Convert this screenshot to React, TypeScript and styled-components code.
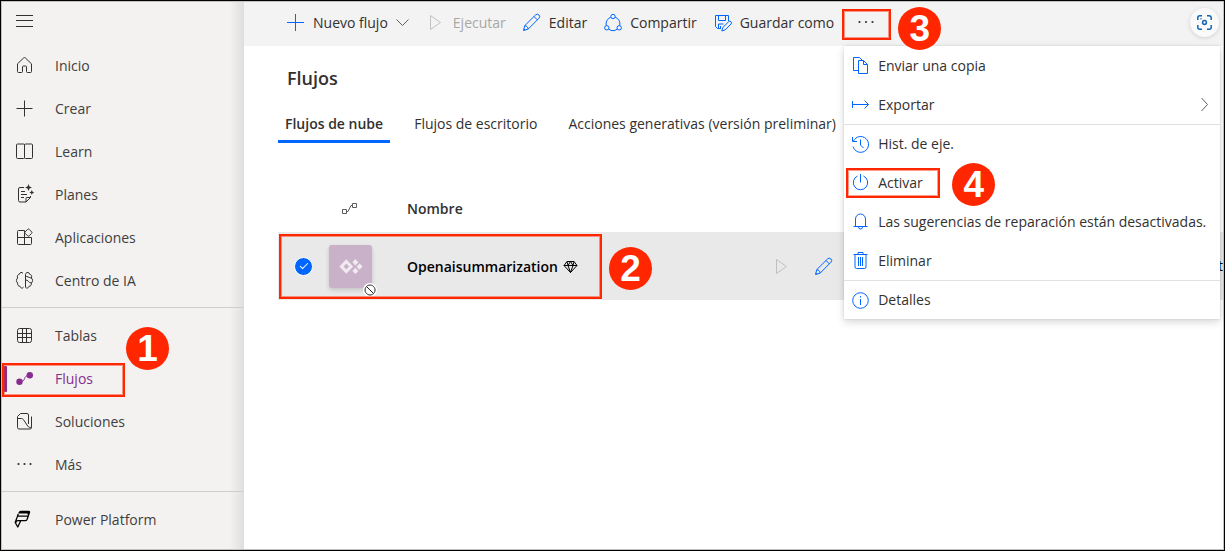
import React from 'react';
import styled, { createGlobalStyle, css } from 'styled-components';

const blue = '#0066ff';
const red = '#ff2600';
const purple = '#862d8f';
const ink = '#323130';

const GlobalStyle = createGlobalStyle`
  *, *::before, *::after { box-sizing: border-box; }
  body {
    margin: 0;
    background: #fff;
    color: ${ink};
    font: 14px/20px "Open Sans", "Noto Sans", sans-serif;
  }
  button { font: inherit; color: inherit; background: none; border: 0; padding: 0; cursor: pointer; }
  a { color: inherit; text-decoration: none; }
  ul { list-style: none; margin: 0; padding: 0; }
`;

const Frame = styled.div`
  min-height: 100vh;
  display: flex;
  border: 1px solid #000;
  overflow: hidden;
`;

const Window = styled.div`
  flex: 1;
  min-width: 0;
  display: flex;
  border: 1px solid #c2c2c2;
`;

const Icon = styled.svg.attrs({ viewBox: '0 0 21 21', 'aria-hidden': true })<{ $tone?: string }>`
  flex: none;
  width: 21px;
  height: 21px;
  fill: none;
  stroke: ${(p) => p.$tone ?? 'currentColor'};
  stroke-width: 1;
  stroke-linejoin: round;
  .solid { fill: ${(p) => p.$tone ?? 'currentColor'}; stroke: none; }
`;

const SmallIcon = styled.svg.attrs({ viewBox: '0 0 15 15', 'aria-hidden': true })`
  flex: none;
  width: 15px;
  height: 15px;
  fill: none;
  stroke: currentColor;
`;

const Sidebar = styled.nav`
  flex: none;
  width: 242px;
  background: linear-gradient(to left, #dfdedd, rgba(243, 242, 241, 0) 14px) #f3f2f1;
`;

const SidebarHeader = styled.div`
  height: 42px;
  padding: 8px 12px;
`;

const IconButton = styled.button`
  display: flex;
`;

const NavGroup = styled.ul`
  & + & {
    margin-top: 5px;
    border-top: 1px solid #cfcecd;
    padding-top: 6px;
  }
`;

const NavItem = styled.li`
  position: relative;
`;

const NavLink = styled.a<{ $active?: boolean }>`
  height: 43px;
  display: flex;
  align-items: center;
  gap: 20px;
  padding-left: 12px;
  color: ${(p) => (p.$active ? purple : '#3f3e3d')};
  ${(p) =>
    p.$active &&
    css`
      &::before {
        content: '';
        position: absolute;
        left: 2px;
        top: 9px;
        width: 3px;
        height: 26px;
        border-radius: 1px;
        background: ${purple};
      }
    `}
`;

const calloutPlaces = {
  nav: css`left: 0; top: 6px; width: 123px; height: 34px;`,
  row: css`left: 1px; top: 2px; width: 323px; height: 65px;`,
  more: css`left: -7px; top: 7px; width: 49px; height: 31px;`,
  menu: css`left: 2px; top: 5px; width: 94px; height: 30px;`,
};

const badgePlaces = {
  nav: css`left: 124px; top: -30px;`,
  row: css`left: 331px; top: 15px;`,
  more: css`left: 49px; top: 5px;`,
  menu: css`left: 108px; top: 0;`,
};

type Place = keyof typeof calloutPlaces;

const Outline = styled.span<{ $place: Place }>`
  position: absolute;
  z-index: 3;
  pointer-events: none;
  border: 2px solid ${red};
  box-shadow: inset 0 0 0 1px rgba(255, 38, 0, 0.45);
  ${(p) => calloutPlaces[p.$place]}
`;

const Badge = styled.span<{ $place: Place }>`
  position: absolute;
  z-index: 4;
  pointer-events: none;
  width: 43px;
  height: 43px;
  border-radius: 50%;
  background: ${red};
  color: #fff;
  font: bold 37px/43px "Liberation Sans", Arial, sans-serif;
  text-align: center;
  ${(p) => badgePlaces[p.$place]}
`;

function Callout({ place, step }: { place: Place; step: number }) {
  return (
    <>
      <Outline $place={place} />
      <Badge $place={place}>{step}</Badge>
    </>
  );
}

const Main = styled.main`
  flex: 1;
  min-width: 0;
  background: #fff;
`;

const Toolbar = styled.div`
  height: 44px;
  display: flex;
  align-items: stretch;
  gap: 15px;
  padding: 0 4px 3px 41px;
  background: #f3f3f3;
`;

const Command = styled.button`
  display: flex;
  align-items: center;
  gap: 7px;
  white-space: nowrap;
  &:disabled { color: #a9a7a5; cursor: default; }
`;

const Chevron = styled(SmallIcon)`
  color: #605e5c;
`;

const MoreHost = styled.div`
  position: relative;
  display: flex;
`;

const MoreButton = styled.button`
  width: 35px;
  display: flex;
  align-items: center;
  justify-content: center;
`;

const CaptureButton = styled.button`
  align-self: center;
  margin-left: auto;
  width: 29px;
  height: 29px;
  border-radius: 50%;
  display: flex;
  align-items: center;
  justify-content: center;
  background: #fafafa;
  box-shadow: 0 1px 4px rgba(0, 0, 0, 0.15);
`;

const Menu = styled.ul`
  position: absolute;
  z-index: 2;
  left: -5px;
  top: 44px;
  width: 376px;
  background: #fff;
  box-shadow: 0 3px 8px rgba(0, 0, 0, 0.16), 0 0 2px rgba(0, 0, 0, 0.12);
`;

const MenuItem = styled.li<{ $divided?: boolean }>`
  position: relative;
  height: 39px;
  display: flex;
  border-top: ${(p) => (p.$divided ? '1px solid #e1e1e1' : '0')};
`;

const MenuButton = styled.button`
  flex: 1;
  display: flex;
  align-items: center;
  gap: 7px;
  padding: 0 8px 0 6px;
  white-space: nowrap;
`;

const SubmenuArrow = styled(Chevron)`
  margin-left: auto;
`;

const Content = styled.section`
  padding: 20px 0 0 34px;
`;

const Title = styled.h1`
  margin: 0 0 18px 9px;
  font-size: 18px;
  line-height: 24px;
  font-weight: 600;
`;

const Tabs = styled.div`
  display: flex;
  gap: 17px;
  margin-bottom: 43px;
`;

const Tab = styled.button<{ $active?: boolean }>`
  height: 35px;
  padding: 6px 7px;
  border-bottom: 3px solid ${(p) => (p.$active ? blue : 'transparent')};
  font-weight: ${(p) => (p.$active ? 600 : 400)};
  white-space: nowrap;
`;

const FlowTable = styled.table`
  width: 100%;
  table-layout: fixed;
  border-collapse: collapse;
  th, td { padding: 0; text-align: left; }
  th { height: 46px; font-weight: 600; }
`;

const SelectCol = styled.col` width: 51px; `;
const KindCol = styled.col` width: 78px; `;
const NameCol = styled.col` width: 364px; `;

const FlowRow = styled.tr`
  height: 68px;
  background: #e9e9e9;
  color: #000;
`;

const SelectCell = styled.td`
  position: relative;
`;

const RowCheck = styled.input.attrs({ type: 'checkbox' })`
  appearance: none;
  display: grid;
  place-items: center;
  width: 19px;
  height: 19px;
  margin: 0 0 0 16px;
  border: 1px solid #fff;
  border-radius: 50%;
  background: #fff;
  &:checked { background: ${blue}; }
  &:checked::after {
    content: '';
    width: 8px;
    height: 4px;
    margin-bottom: 2px;
    border: solid #fff;
    border-width: 0 0 1px 1px;
    transform: rotate(-45deg);
  }
`;

const KindHead = styled.div`
  display: flex;
  padding-left: 10px;
`;

const Tile = styled.div`
  position: relative;
  width: 43px;
  height: 43px;
  border-radius: 3px;
  background: #c8b1c9;
  box-shadow: 0 2px 4px rgba(0, 0, 0, 0.16);
`;

const TileArt = styled.svg`
  display: block;
  width: 43px;
  height: 43px;
`;

const OffMark = styled.svg`
  position: absolute;
  right: -5px;
  bottom: -9px;
  width: 14px;
  height: 14px;
`;

const FlowName = styled.a`
  display: flex;
  align-items: center;
  gap: 5px;
  padding-top: 2px;
  font-weight: 600;
`;

const RowActions = styled.div`
  display: flex;
  gap: 21px;
`;

const TypeText = styled.div`
  text-align: right;
`;

const Dots = () => (
  <>
    <circle className="solid" cx="4.5" cy="10" r="1.1" />
    <circle className="solid" cx="10.5" cy="10" r="1.1" />
    <circle className="solid" cx="16.5" cy="10" r="1.1" />
  </>
);

const PlayShape = () => <path d="M5.5 3.5V17.5L15.5 10.5Z" />;

const PencilShape = () => (
  <>
    <path d="M2.500 18.500L3.800 13.600L14.600 2.900a2.300 2.300 0 0 1 3.300 3.400L7.200 17.100Z" />
    <path d="M13 4.500l3.400 3.400M3.800 13.600c1.800.2 3.200 1.600 3.400 3.500M2.800 17l1.400 1.200" />
  </>
);

const shapes: Record<string, React.ReactNode> = {
  inicio: <path d="M3.500 8.800L9.700 2.900a1.200 1.200 0 0 1 1.600 0L17.500 8.800V16.500a1 1 0 0 1-1 1h-3a1 1 0 0 1-1-1V12a1 1 0 0 0-1-1h-2a1 1 0 0 0-1 1v4.500a1 1 0 0 1-1 1h-3a1 1 0 0 1-1-1Z" />,
  crear: <path d="M10.500 2.500V18.500M2.500 10.500H18.500" />,
  learn: <path d="M10.500 4a1 1 0 0 0-1-1H3.500a1 1 0 0 0-1 1V16.500a1 1 0 0 0 1 1H9.500a1 1 0 0 0 1-1V4a1 1 0 0 1 1-1h6a1 1 0 0 1 1 1V16.500a1 1 0 0 1-1 1h-6a1 1 0 0 1-1-1" />,
  planes: (
    <>
      <path d="M10 3.500H6a1.500 1.500 0 0 0-1.500 1.500V16.500a1.500 1.500 0 0 0 1.500 1.500H12L16.500 13.500V12M12 18V14.500a1 1 0 0 1 1-1H16.500M7 7.500h4M7 10.500h6M7 13.500h3" />
      <path className="solid" d="M14.500 0l1 2.500 2.500 1-2.500 1-1 2.500-1-2.500-2.500-1 2.500-1zM17.800 6l.8 1.700 1.700.8-1.700.8-.8 1.700-.8-1.700-1.700-.8 1.700-.8z" />
    </>
  ),
  aplicaciones: (
    <>
      <path d="M10.500 17.500V3.500H4.500a1 1 0 0 0-1 1V16.500a1 1 0 0 0 1 1H16.500a1 1 0 0 0 1-1V10.500H3.500" />
      <path fill="#f3f2f1" d="M13.700 2.300a1 1 0 0 1 1.400 0L17.700 4.900a1 1 0 0 1 0 1.400L15.100 8.900a1 1 0 0 1-1.400 0L11.100 6.300a1 1 0 0 1 0-1.400Z" />
    </>
  ),
  ia: (
    <>
      <path d="M9 3.300C8 1.900 5.700 2.200 5.400 4.200C3.500 4.500 2.800 6.500 3.700 8C2 9 2 12 3.700 13C3.200 15 4.500 16.300 6 16.300C6.600 18.300 8.500 18.600 9.500 17.300" />
      <path d="M12 3.300C13 1.900 15.300 2.200 15.600 4.200C17.500 4.500 18.200 6.500 17.300 8C19 9 19 12 17.300 13C17.800 15 16.500 16.300 15 16.300C14.400 18.300 12.500 18.600 11.500 17.300V4.200Q11.500 3.700 12 3.300ZM11.500 6.500C13.500 6 14 7.500 17.300 8M11.500 10C14 9.500 14.500 13 17.300 13" />
    </>
  ),
  tablas: (
    <>
      <rect x="3.500" y="3.500" width="14" height="14" rx="2" />
      <path d="M8.500 3.500v14M12.500 3.500v14M3.500 8.500h14M3.500 12.500h14" />
    </>
  ),
  flujos: (
    <>
      <circle className="solid" cx="5.500" cy="13.700" r="3.200" />
      <circle className="solid" cx="15.800" cy="7.300" r="3.200" />
      <path d="M5.500 13.700C13 14 8 7.300 15.800 7.300" />
    </>
  ),
  soluciones: (
    <>
      <path d="M14.500 13V4a1.500 1.500 0 0 0-1.500-1.500H6.500L3.500 5.500V16.500a1.500 1.500 0 0 0 1.500 1.500H16a1.500 1.500 0 0 0 1.500-1.500V5.500" />
      <path d="M3.500 7.500H7.500c1 0 1.500.5 2.200 1.500l4 6c.8 1.200 1.800 1.500 3.800 1.500" />
    </>
  ),
  mas: <Dots />,
  power: (
    <>
      <path className="solid" d="M4 4.500L5.200 2.600Q5.700 1.700 6.700 1.700H14.500Q16.800 1.700 16 4L15.200 6.300Q14.700 7.500 13.500 7.500L13.800 5.500Q13.900 4.500 12.900 4.500Z" />
      <path strokeWidth="1.300" d="M4.200 7.200H14.200L13 10.500Q12.500 11.700 11.300 11.700H6.700L3.800 18L1.200 13.500L3 8.500Q3.400 7.200 4.500 7.200M3.200 8L4.200 5M6.700 11.700H4Q2.500 11.700 1.800 13.500" />
    </>
  ),
  copia: <path d="M8 15.500H3.500V2.500H9.500L12.500 5.500M8.500 5.500H13.500L17.500 9.500V18.500H8.500ZM13.500 5.500V9.500H17.500" />,
  exportar: <path d="M2.500 7v7M3 10.500H18.500M14.500 6.500l4 4-4 4" />,
  historial: <path d="M3.500 7A7.900 7.900 0 1 1 3 12.500M2.500 3V7.500H7M10.500 5.500v5.500l3 3" />,
  activar: <path d="M10.500 2v8.500M7.500 4A7.200 7.200 0 1 0 13.500 4" />,
  campana: <path d="M5.500 15.500V8a5 5 0 0 1 10 0V15.500M3.500 15.500H17.500M8.500 16a2 2 0 0 0 4 0" />,
  eliminar: <path d="M3.500 4.500H17.500M8 4.500V2.500H13V4.500M5 4.500V17a1.500 1.500 0 0 0 1.500 1.500H14.500A1.500 1.500 0 0 0 16 17V4.500M8.500 7v9M10.500 7v9M12.500 7v9" />,
  detalles: (
    <>
      <circle cx="10.500" cy="10.500" r="7.800" />
      <path d="M10.500 9v6M10.500 6v1.500" />
    </>
  ),
};

const navGroups = [
  [
    ['inicio', 'Inicio'],
    ['crear', 'Crear'],
    ['learn', 'Learn'],
    ['planes', 'Planes'],
    ['aplicaciones', 'Aplicaciones'],
    ['ia', 'Centro de IA'],
  ],
  [
    ['tablas', 'Tablas'],
    ['flujos', 'Flujos'],
    ['soluciones', 'Soluciones'],
    ['mas', 'Más'],
  ],
  [['power', 'Power Platform']],
];

const menuItems = [
  { icon: 'copia', label: 'Enviar una copia' },
  { icon: 'exportar', label: 'Exportar', submenu: true },
  { icon: 'historial', label: 'Hist. de eje.', divided: true },
  { icon: 'activar', label: 'Activar', step: 4 },
  { icon: 'campana', label: 'Las sugerencias de reparación están desactivadas.' },
  { icon: 'eliminar', label: 'Eliminar' },
  { icon: 'detalles', label: 'Detalles', divided: true },
];

export default function App() {
  return (
    <Frame>
      <GlobalStyle />
      <Window>
        <Sidebar aria-label="Principal">
          <SidebarHeader>
            <IconButton aria-label="Menú">
              <Icon $tone={ink}>
                <path d="M2 5.500H19M2 10.500H19M2 16.500H19" />
              </Icon>
            </IconButton>
          </SidebarHeader>
          {navGroups.map((group) => (
            <NavGroup key={group[0][0]}>
              {group.map(([id, label]) => (
                <NavItem key={id}>
                  <NavLink href={`#${id}`} $active={id === 'flujos'}>
                    <Icon $tone={id === 'flujos' ? purple : id === 'power' ? '#000' : ink}>{shapes[id]}</Icon>
                    {label}
                  </NavLink>
                  {id === 'flujos' && <Callout place="nav" step={1} />}
                </NavItem>
              ))}
            </NavGroup>
          ))}
        </Sidebar>

        <Main>
          <Toolbar>
            <Command>
              <Icon $tone={blue}>
                <path d="M10.500 2V19M2 10.500H19" />
              </Icon>
              Nuevo flujo
              <Chevron>
                <path d="M1.500 4.500l6 6 6-6" />
              </Chevron>
            </Command>
            <Command disabled>
              <Icon $tone="#c4c2c0">
                <PlayShape />
              </Icon>
              Ejecutar
            </Command>
            <Command>
              <Icon $tone={blue}>
                <PencilShape />
              </Icon>
              Editar
            </Command>
            <Command>
              <Icon $tone={blue}>
                <circle cx="11" cy="4.500" r="2.200" />
                <circle cx="4.800" cy="15.800" r="2.200" />
                <circle cx="17.200" cy="15.800" r="2.200" />
                <path d="M8.800 5.200A7.200 7.200 0 0 0 4.200 13.500M13.200 5.200A7.200 7.200 0 0 1 17.800 13.500M6.800 17.200A7.200 7.200 0 0 0 15.200 17.200" />
              </Icon>
              Compartir
            </Command>
            <Command>
              <Icon $tone={blue}>
                <path d="M9 16.500H5.500L3.500 14.500V3.500H16.500V9M6.500 3.500V8.500H13.500V3.500M6.500 16.500V12H11.500M8.500 14v2.500" />
                <path d="M9.800 19L10.800 15.500L16.700 9.700a1.600 1.600 0 0 1 2.300 2.300L13.200 17.900Z" />
              </Icon>
              Guardar como
            </Command>
            <MoreHost>
              <MoreButton aria-label="Más comandos" aria-haspopup="menu" aria-expanded="true">
                <Icon $tone={ink}>
                  <circle className="solid" cx="3.500" cy="10" r="1.100" />
                  <circle className="solid" cx="10" cy="10" r="1.100" />
                  <circle className="solid" cx="16.500" cy="10" r="1.100" />
                </Icon>
              </MoreButton>
              <Callout place="more" step={3} />
              <Menu>
                {menuItems.map((item) => (
                  <MenuItem key={item.icon} $divided={item.divided}>
                    <MenuButton>
                      <Icon $tone={blue}>{shapes[item.icon]}</Icon>
                      {item.label}
                      {item.submenu && (
                        <SubmenuArrow>
                          <path d="M4.500 1l6 6.500-6 6.500" />
                        </SubmenuArrow>
                      )}
                    </MenuButton>
                    {item.step && <Callout place="menu" step={item.step} />}
                  </MenuItem>
                ))}
              </Menu>
            </MoreHost>
            <CaptureButton aria-label="Captura visual">
              <Icon $tone="#1267b4">
                <path strokeWidth="1.500" d="M3.800 8V5.800a2 2 0 0 1 2-2H8M13 3.800h2.200a2 2 0 0 1 2 2V8M17.200 13v2.200a2 2 0 0 1-2 2H13M8 17.200H5.800a2 2 0 0 1-2-2V13M6.500 6.800h1" />
                <circle strokeWidth="1.500" cx="10.500" cy="10.500" r="1.900" />
              </Icon>
            </CaptureButton>
          </Toolbar>

          <Content>
            <Title>Flujos</Title>
            <Tabs role="tablist">
              <Tab role="tab" aria-selected="true" $active>Flujos de nube</Tab>
              <Tab role="tab" aria-selected="false">Flujos de escritorio</Tab>
              <Tab role="tab" aria-selected="false">Acciones generativas (versión preliminar)</Tab>
            </Tabs>
            <FlowTable>
              <colgroup>
                <SelectCol />
                <KindCol />
                <NameCol />
                <col />
                <col />
              </colgroup>
              <thead>
                <tr>
                  <th />
                  <th>
                    <KindHead>
                      <Icon $tone="#605e5c">
                        <path d="M3.500 10.500h4v4h-4zM13.500 4.500h4v4h-4zM7.500 12.500h1.500L12 6.500h1.500" />
                      </Icon>
                    </KindHead>
                  </th>
                  <th>Nombre</th>
                  <th />
                  <th />
                </tr>
              </thead>
              <tbody>
                <FlowRow>
                  <SelectCell>
                    <RowCheck defaultChecked aria-label="Seleccionar Openaisummarization" />
                    <Callout place="row" step={2} />
                  </SelectCell>
                  <td>
                    <Tile>
                      <TileArt viewBox="0 0 43 43" aria-hidden="true">
                        <path fill="none" stroke="#f1eaf1" strokeWidth="3" d="M17.300 16.500L22.100 21.500L17.300 26.500L12.500 21.500Z" />
                        <path fill="#f1eaf1" d="M26.400 14l3 3.200-3 3.200-3-3.200zM30.600 18.400l3 3.200-3 3.200-3-3.200zM26.400 22.700l3 3.200-3 3.200-3-3.200z" />
                      </TileArt>
                      <OffMark viewBox="0 0 14 14" aria-hidden="true">
                        <circle cx="7" cy="7" r="7" fill="#fff" />
                        <path fill="none" stroke="#222" d="M7 2a5 5 0 1 0 .1 0M3.500 3.500l7 7" />
                      </OffMark>
                    </Tile>
                  </td>
                  <td>
                    <FlowName href="#openaisummarization">
                      Openaisummarization
                      <SmallIcon>
                        <path d="M4 1.500h7l3 4-6.500 7L1 5.500zM1 5.500h13M5 5.500l2.500 7 2.500-7M4 1.500l1 4 2.500-4 2.500 4 1-4" />
                      </SmallIcon>
                    </FlowName>
                  </td>
                  <td>
                    <RowActions>
                      <IconButton disabled aria-label="Ejecutar flujo">
                        <Icon $tone="#c0c0c0">
                          <PlayShape />
                        </Icon>
                      </IconButton>
                      <IconButton aria-label="Editar flujo">
                        <Icon $tone={blue}>
                          <PencilShape />
                        </Icon>
                      </IconButton>
                    </RowActions>
                  </td>
                  <td>
                    <TypeText>t</TypeText>
                  </td>
                </FlowRow>
              </tbody>
            </FlowTable>
          </Content>
        </Main>
      </Window>
    </Frame>
  );
}
